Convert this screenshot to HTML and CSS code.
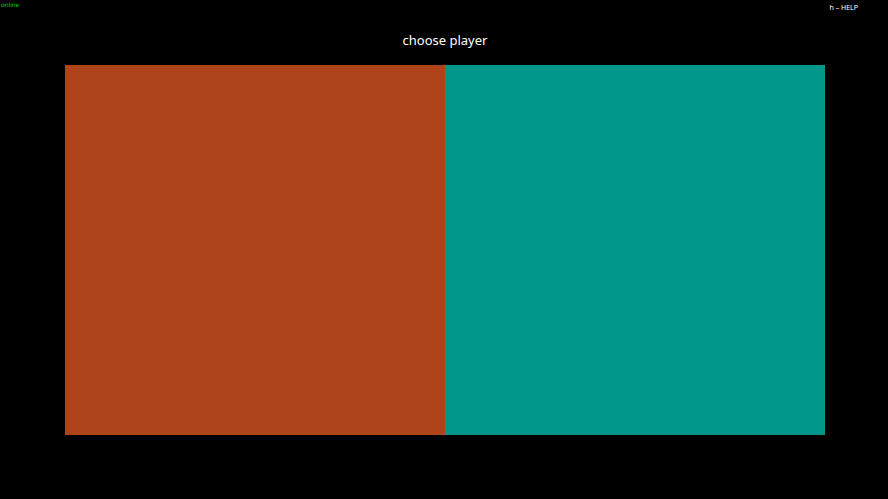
FILE: index.html
```html
<!DOCTYPE html>
<html lang="en">
<head>
<meta charset="utf-8">
<title>choose player</title>
<link rel="stylesheet" href="styles.css">
</head>
<body>
<header class="status-bar">
  <span class="status">online</span>
  <span class="help">h – HELP</span>
</header>
<main class="chooser">
  <h1 class="title">choose player</h1>
  <div class="players">
    <button class="player player-one" type="button" aria-label="Player one"></button>
    <button class="player player-two" type="button" aria-label="Player two"></button>
  </div>
</main>
</body>
</html>
```
FILE: styles.css
```css
* {
  box-sizing: border-box;
}

body {
  display: flex;
  flex-direction: column;
  min-height: 100vh;
  margin: 0;
  background: #000;
  color: #fff;
  font-family: "Noto Sans", sans-serif;
}

.status-bar {
  display: flex;
  justify-content: space-between;
  height: 14px;
  padding: 0 30px 0 1px;
  font-family: "DejaVu Sans", sans-serif;
  font-size: 6px;
  line-height: 10px;
}

.status {
  color: #00d800;
}

.help {
  padding-top: 3px;
  font-family: "Noto Sans", sans-serif;
  font-size: 7px;
}

.chooser {
  flex: 1;
  display: flex;
  flex-direction: column;
  padding: 16px 63px 64px 65px;
}

.title {
  margin: 0 0 15px;
  font-size: 13px;
  font-weight: 400;
  line-height: 20px;
  text-align: center;
}

.players {
  flex: 1;
  display: grid;
  grid-template-columns: 1fr 1fr;
}

.player {
  padding: 0;
  border: 0;
  cursor: pointer;
}

.player-one {
  background: #af431a;
}

.player-two {
  background: #00968a;
}
```
